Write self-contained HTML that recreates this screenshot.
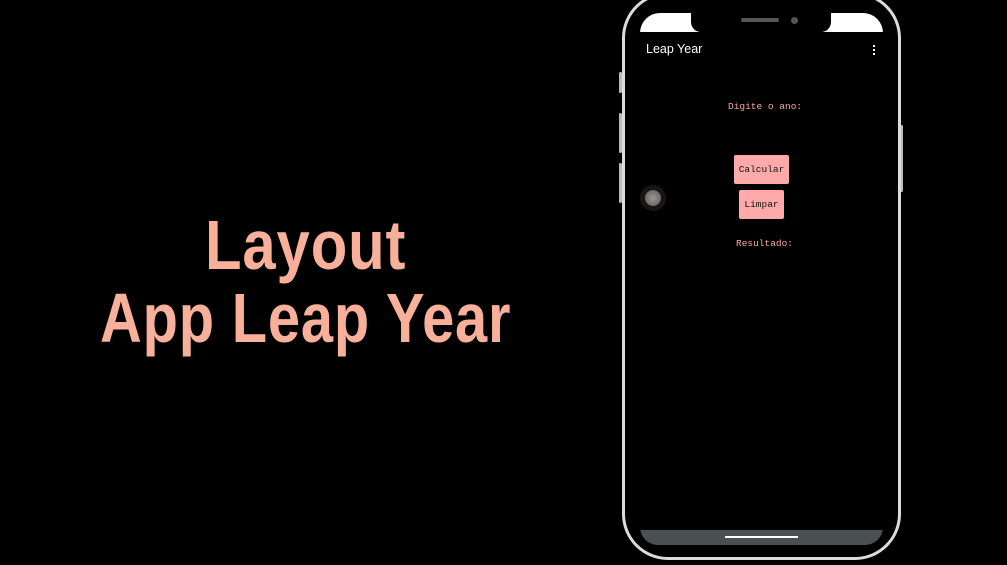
<!DOCTYPE html>
<html><head><meta charset="utf-8"><style>
html,body{margin:0;padding:0;background:#000;width:1007px;height:565px;overflow:hidden;position:relative;font-family:"Liberation Sans",sans-serif}
.t{position:absolute;color:#f8b09a;font-weight:bold;font-size:70px;line-height:1;white-space:nowrap;transform-origin:left top;letter-spacing:1px}
.phone{position:absolute;left:622px;top:-8px;width:279px;height:568px;border:3px solid #dcdcdc;border-radius:46px;box-sizing:border-box}
.btnside{position:absolute;background:#bbb;border-radius:2px;width:3px}
.screen{position:absolute;left:640px;top:13px;width:243px;height:532px;background:#000;border-radius:20px 20px 18px 18px;overflow:hidden}
.status{position:absolute;left:0;top:0;width:243px;height:19px;background:#fff}
.notch{position:absolute;left:51px;top:-13px;width:140px;height:32px;background:#000;border-radius:0 0 10px 10px}
.mono{font-family:"Liberation Mono",monospace;font-size:9.5px;position:absolute}
.b{position:absolute;background:#ffaaaa;color:#111;border-radius:2px;text-align:center;font-family:"Liberation Mono",monospace;font-size:9.5px}
</style></head><body>
<div class="t" style="left:205px;top:210px;transform:scaleX(0.855)">Layout</div>
<div class="t" style="left:100px;top:283px;transform:scaleX(0.826)">App Leap Year</div>

<div class="btnside" style="left:619px;top:72px;height:21px"></div>
<div class="btnside" style="left:619px;top:113px;height:40px"></div>
<div class="btnside" style="left:619px;top:163px;height:40px"></div>
<div class="btnside" style="left:900px;top:125px;height:67px"></div>
<div class="phone"></div>
<div class="screen">
  <div class="status"></div>
  <div class="notch"><div style="position:absolute;left:50px;top:18px;width:38px;height:4px;background:#555;border-radius:2px"></div><div style="position:absolute;left:100px;top:17px;width:7px;height:7px;background:#555;border-radius:50%"></div></div>
  <div style="position:absolute;left:6px;top:29px;color:#fff;font-size:12.5px">Leap Year</div>
  <div style="position:absolute;left:233px;top:32px;width:2px;height:2px;background:#fff;box-shadow:0 4px #fff,0 8px #fff"></div>
  <div class="mono" style="left:88px;top:88px;color:#f4a8a0">Digite o ano:</div>
  <div class="b" style="left:94px;top:142px;width:55px;height:29px;line-height:29px">Calcular</div>
  <div class="b" style="left:99px;top:177px;width:45px;height:29px;line-height:29px">Limpar</div>
  <div class="mono" style="left:96px;top:225px;color:#f4a8a0">Resultado:</div>
  <div style="position:absolute;left:0;top:517px;width:243px;height:15px;background:#4a5052"></div>
  <div style="position:absolute;left:85px;top:523px;width:73px;height:2px;background:#fff"></div>
</div>
<div style="position:absolute;left:640px;top:185px;width:26px;height:26px;border-radius:50%;background:#1a1514"></div>
<div style="position:absolute;left:645px;top:190px;width:16px;height:16px;border-radius:50%;background:radial-gradient(#999,#555)"></div>
</body></html>
